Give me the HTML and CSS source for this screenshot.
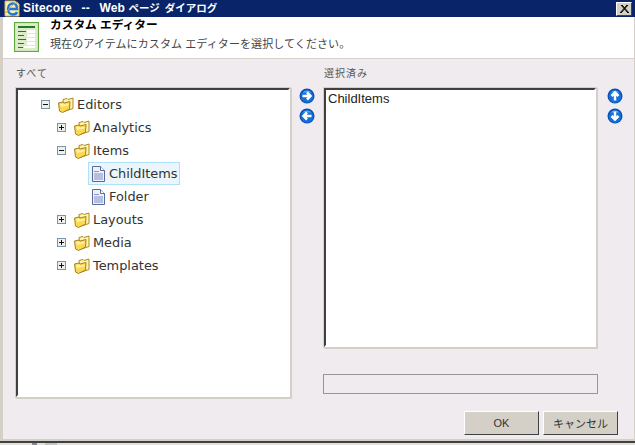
FILE: index.html
```html
<!DOCTYPE html>
<html lang="ja">
<head>
<meta charset="utf-8">
<title>Sitecore -- Web ページ ダイアログ</title>
<link rel="stylesheet" href="styles.css">
</head>
<body>
<svg class="defs" width="0" height="0" aria-hidden="true">
  <symbol id="folder" viewBox="0 0 16 16">
    <path d="M5 2.500 L9 1.500 L10 2.500 L15 1 L15 11.500 L6 14.500 Z" fill="#fff3b0" stroke="#b08a20" stroke-width="1"/>
    <path d="M.5 6 L5 5 L6 6 L12 4.500 L11.500 12 L4.500 15.500 L1.500 14 Z" fill="#fcd850" stroke="#a8801c" stroke-width="1"/>
    <path d="M2 7 L5 6.500 L6 7.500 L10.500 6.500 L10.500 8.500 L3 10 Z" fill="#fff1a6"/>
  </symbol>
  <symbol id="page" viewBox="0 0 16 16">
    <path d="M2.500 .5 H10.500 L14.500 4.500 V15.500 H2.500 Z" fill="#eef0f8" stroke="#5a6a9a"/>
    <path d="M10.500 .5 V4.500 H14.500" fill="#fff" stroke="#5a6a9a"/>
    <rect x="4" y="7" width="9" height="7" fill="#b4bfe2"/>
    <rect x="4" y="5" width="5" height="1" fill="#8b99c6"/>
  </symbol>
  <symbol id="plus" viewBox="0 0 9 9">
    <rect x=".5" y=".5" width="8" height="8" fill="#eef0ee" stroke="#7b93a8"/>
    <path d="M2 4.500 H7 M4.500 2 V7" stroke="#111" fill="none"/>
  </symbol>
  <symbol id="minus" viewBox="0 0 9 9">
    <rect x=".5" y=".5" width="8" height="8" fill="#eef0ee" stroke="#7b93a8"/>
    <path d="M2 4.500 H7" stroke="#111" fill="none"/>
  </symbol>
  <symbol id="ball" viewBox="0 0 16 16">
    <circle cx="8" cy="8" r="7.500" fill="#0a4fb4"/>
    <circle cx="8" cy="8.500" r="6.200" fill="#1470d8"/>
    <path d="M3.500 4.500 A6 6 0 0 1 12.500 4.500 Z" fill="#58a8ee"/>
  </symbol>
</svg>

<header class="titlebar">
  <svg class="ie-icon" width="17" height="17" viewBox="0 0 17 17">
    <path d="M1 1 H11 L15 4 V16 H1 Z" fill="#fbeeb4" stroke="#d8b850"/>
    <path d="M4.500 9 H13 C13 5 11 3.500 9 3.500 C6 3.500 4 6 4 9 C4 12.500 6.500 14.500 9 14.500 C11 14.500 12.500 13.500 13 12" fill="none" stroke="#1f78d8" stroke-width="2.400"/>
    <path d="M2 13 C4 9 9 4 14 2" fill="none" stroke="#e8a030" stroke-width="1"/>
  </svg>
  <span class="title-text"><span class="title-latin">Sitecore -- Web</span> <span class="title-jp">ページ ダイアログ</span></span>
  <button class="close" type="button" aria-label="閉じる">
    <svg width="9" height="8" viewBox="0 0 9 8"><path d="M1 0 L8 8 M2 0 L9 8 M8 0 L1 8 M7 0 L0 8" stroke="#000" fill="none"/></svg>
  </button>
</header>

<div class="window">
  <section class="banner">
    <svg class="banner-icon" width="25" height="30" viewBox="0 0 25 30">
      <rect x=".5" y=".5" width="24" height="29" fill="#cfe6b6" stroke="#62a83e"/>
      <rect x="2" y="2" width="21" height="26" fill="#dcecc8"/>
      <rect x="4" y="4" width="17" height="2" fill="#1f7a30"/>
      <rect x="4" y="9" width="8" height="1" fill="#1f7a30"/><rect x="13" y="8" width="8" height="3" fill="#fff"/>
      <rect x="4" y="13" width="6" height="1" fill="#1f7a30"/><rect x="13" y="12" width="8" height="3" fill="#fff"/>
      <rect x="4" y="17" width="8" height="1" fill="#1f7a30"/><rect x="13" y="16" width="8" height="3" fill="#fff"/>
      <rect x="4" y="21" width="6" height="1" fill="#1f7a30"/><rect x="13" y="20" width="8" height="3" fill="#fff"/>
      <rect x="4" y="25" width="5" height="1" fill="#1f7a30"/><rect x="10" y="24" width="11" height="2" fill="#fff"/>
    </svg>
    <div class="banner-text">
      <h1>カスタム エディター</h1>
      <p>現在のアイテムにカスタム エディターを選択してください。</p>
    </div>
  </section>

  <main class="content">
    <div class="columns">
      <section class="col col-all">
        <h2>すべて</h2>
        <div class="well well-tree">
          <ul class="tree">
            <li>
              <div class="node"><svg class="toggle"><use href="#minus"/></svg><svg class="icon"><use href="#folder"/></svg><span class="label">Editors</span></div>
              <ul>
                <li><div class="node"><svg class="toggle"><use href="#plus"/></svg><svg class="icon"><use href="#folder"/></svg><span class="label">Analytics</span></div></li>
                <li>
                  <div class="node"><svg class="toggle"><use href="#minus"/></svg><svg class="icon"><use href="#folder"/></svg><span class="label">Items</span></div>
                  <ul>
                    <li><div class="node leaf selected"><svg class="icon"><use href="#page"/></svg><span class="label">ChildItems</span></div></li>
                    <li><div class="node leaf"><svg class="icon"><use href="#page"/></svg><span class="label">Folder</span></div></li>
                  </ul>
                </li>
                <li><div class="node"><svg class="toggle"><use href="#plus"/></svg><svg class="icon"><use href="#folder"/></svg><span class="label">Layouts</span></div></li>
                <li><div class="node"><svg class="toggle"><use href="#plus"/></svg><svg class="icon"><use href="#folder"/></svg><span class="label">Media</span></div></li>
                <li><div class="node"><svg class="toggle"><use href="#plus"/></svg><svg class="icon"><use href="#folder"/></svg><span class="label">Templates</span></div></li>
              </ul>
            </li>
          </ul>
        </div>
      </section>

      <div class="arrows arrows-move">
        <svg class="arrow" viewBox="0 0 16 16"><use href="#ball"/><path d="M3.500 8 H11 M8 4.500 L11.500 8 L8 11.500" fill="none" stroke="#fff" stroke-width="2.500"/></svg>
        <svg class="arrow" viewBox="0 0 16 16"><use href="#ball"/><path d="M12.500 8 H5 M8 4.500 L4.500 8 L8 11.500" fill="none" stroke="#fff" stroke-width="2.500"/></svg>
      </div>

      <section class="col col-selected">
        <h2>選択済み</h2>
        <div class="well well-list"><div class="list-item">ChildItems</div></div>
        <div class="progress"></div>
      </section>

      <div class="arrows arrows-order">
        <svg class="arrow" viewBox="0 0 16 16"><use href="#ball"/><path d="M8 12.500 V5 M4.500 8 L8 4.500 L11.500 8" fill="none" stroke="#fff" stroke-width="2.500"/></svg>
        <svg class="arrow" viewBox="0 0 16 16"><use href="#ball"/><path d="M8 3.500 V11 M4.500 8 L8 11.500 L11.500 8" fill="none" stroke="#fff" stroke-width="2.500"/></svg>
      </div>
    </div>

    <footer class="buttons">
      <button class="btn btn-ok" type="button">OK</button>
      <button class="btn btn-cancel" type="button">キャンセル</button>
    </footer>
  </main>
</div>

<div class="taskbar"><span class="task-mark"></span><span class="task-mark task-mark-wide"></span></div>
</body>
</html>
```

FILE: styles.css
```css
* { box-sizing: border-box; }
html, body { height: 100%; }
body {
  margin: 0;
  width: 635px;
  height: 445px;
  overflow: hidden;
  display: flex;
  flex-direction: column;
  background: #d4d0c8;
  font-family: "Liberation Sans", "Noto Sans CJK JP", sans-serif;
  font-size: 12px;
  color: #333;
}
.defs { position: absolute; }

.titlebar {
  flex: 0 0 17px;
  display: flex;
  align-items: center;
  background: #0a246a;
  color: #fff;
}
.ie-icon { flex: none; margin-left: 4px; margin-right: 2px; }
.title-text { flex: 1; font-weight: 700; font-size: 12px; line-height: 17px; white-space: nowrap; }
.title-latin { letter-spacing: .2px; word-spacing: 6px; }
.title-jp { font-size: 10.500px; word-spacing: 2px; }
.close {
  flex: none;
  width: 16px;
  height: 14px;
  margin-right: 3px;
  padding: 0;
  display: flex;
  align-items: center;
  justify-content: center;
  background: #d4d0c8;
  border: 1px solid;
  border-color: #fff #404040 #404040 #fff;
}

.window {
  flex: 1;
  display: flex;
  flex-direction: column;
  min-height: 0;
  margin-left: 3px;
  margin-right: 1px;
  border-bottom: 2px solid #d4d0c8;
}

.banner {
  flex: 0 0 42px;
  display: flex;
  background: #fff;
  border-bottom: 1px solid #d4d0c8;
  padding: 4px 0 0 11px;
}
.banner-icon { flex: none; margin-top: 1px; }
.banner-text { margin-left: 11px; }
.banner h1 { margin: -3px 0 0; font-size: 11.700px; line-height: 14px; font-weight: 700; color: #000; }
.banner p { margin: 4px 0 0; font-size: 11px; line-height: 16px; letter-spacing: .1px; color: #444; }

.content {
  flex: 1;
  min-height: 0;
  display: flex;
  flex-direction: column;
  background: #efebef;
  padding: 8px 0 4px 13px;
}
.columns { flex: 1; display: flex; min-height: 0; }
.col { flex: none; display: flex; flex-direction: column; }
.col-all { width: 274px; }
.col-selected { width: 272px; }
.col h2 { margin: 0 0 8px; font-size: 10px; line-height: 13px; font-weight: 400; color: #555; letter-spacing: 1px; }

.well {
  flex: none;
  background: #fff;
  border: 2px solid;
  border-color: #404040 #fff #fff #404040;
  outline: 1px solid #d4d0c8;
  box-shadow: 1px 1px 0 1px #d4d0c8;
}
.well-tree { height: 309px; padding: 3px 0 0 23px; }
.well-list { height: 259px; padding: 1px 2px; }
.list-item { font-size: 13px; line-height: 16px; color: #222; }
.progress { flex: none; width: 275px; height: 20px; margin: 27px 0 0 -1px; border: 1px solid #999498; }

.tree, .tree ul { list-style: none; margin: 0; padding: 0; }
.tree ul { padding-left: 16px; }
.node { height: 23px; display: flex; align-items: center; }
.toggle { flex: none; width: 9px; height: 9px; margin-right: 8px; }
.icon { flex: none; width: 16px; height: 16px; margin-right: 3px; }
.label { font-family: "DejaVu Sans", sans-serif; font-size: 12.900px; line-height: 16px; color: #333; white-space: nowrap; }
.leaf { width: 92px; margin-left: 15px; padding-left: 1px; border: 1px solid transparent; }
.selected { background: #eaf5fc; border-color: #aee0f8; }

.arrows { flex: none; display: flex; flex-direction: column; align-items: center; gap: 4px; padding-top: 21px; }
.arrows-move { width: 34px; }
.arrows-order { width: 38px; }
.arrow { width: 16px; height: 16px; }

.buttons { flex: none; display: flex; justify-content: flex-end; gap: 4px; padding-right: 16px; }
.btn {
  height: 24px;
  width: 75px;
  padding: 0;
  background: #d4d0c8;
  border: 1px solid;
  border-color: #fff #404040 #404040 #fff;
  font-family: "Liberation Sans", "Noto Sans CJK JP", sans-serif;
  font-size: 11px;
  color: #333;
}

.taskbar {
  flex: 0 0 4px;
  display: flex;
  gap: 8px;
  padding-left: 32px;
  background: #e4e2dc;
  border-top: 2px solid #404040;
}
.task-mark { width: 5px; background: #8a8a92; }
.task-mark-wide { width: 12px; background: #c4c4c4; }
```
